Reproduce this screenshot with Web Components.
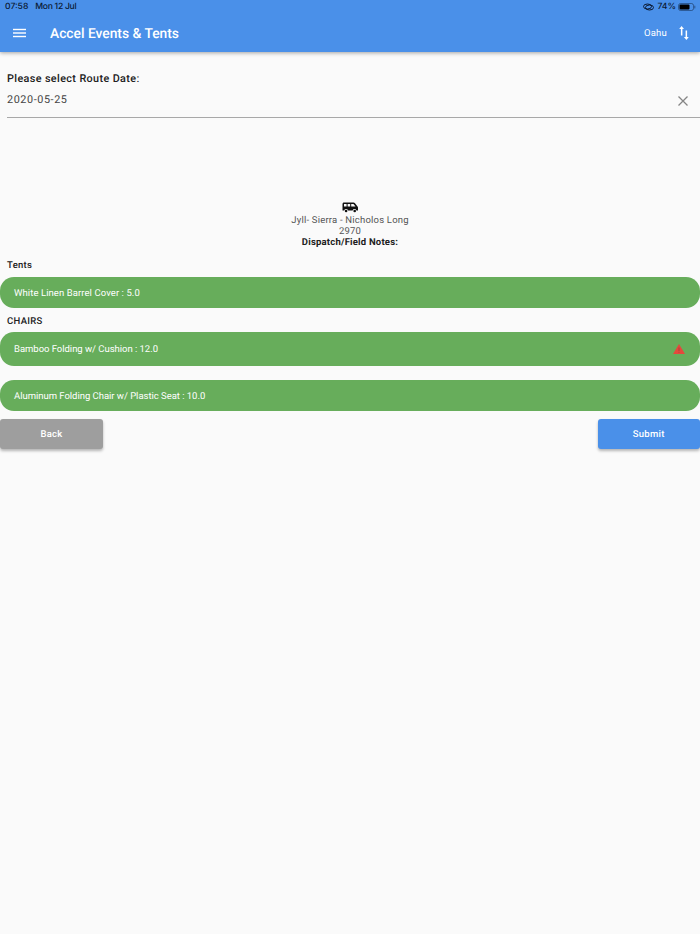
<!DOCTYPE html>
<html><head><meta charset="utf-8">
<style>
html,body{margin:0;padding:0;height:100%}
body{background:#fafafa;font-family:Roboto,sans-serif;color:#212121;height:934px;overflow:hidden;text-rendering:geometricPrecision}
</style></head><body>
<template id="t-bar"><style>
:host{display:block;height:52px;background:#4a90e9;box-shadow:0 1px 4px rgba(0,0,0,.35);position:relative;color:#fff}
.status{height:13px;display:flex;justify-content:space-between;align-items:center;padding:0 4px 0 5px;font:500 8.6px Inter,Roboto,sans-serif;color:#0b1a33}
.l{display:flex;gap:7px}.d{letter-spacing:-.3px}.r{display:flex;align-items:center;gap:2px}
.r svg:first-child{margin-right:1px}
.main{height:39px;display:flex;align-items:center;padding:0 11px 0 13px}
.title{font:500 13.8px Roboto,sans-serif;letter-spacing:0;margin-left:24px;flex:1;position:relative;top:1px}
.loc{font:400 9.5px Roboto,sans-serif;letter-spacing:.2px;margin-right:12px;position:relative;top:1px}
svg{display:block}
</style>
<div class="status"><div class="l"><span>07:58</span><span class="d">Mon 12 Jul</span></div>
<div class="r"><svg width="11" height="8" viewBox="0 0 11 8" fill="none" stroke="#0b1a33" stroke-width="1"><ellipse cx="4.5" cy="3.5" rx="4" ry="2.5"/><ellipse cx="6.5" cy="4.5" rx="4" ry="2.5"/></svg><span>74%</span>
<svg width="18" height="8" viewBox="0 0 18 8"><rect x=".5" y=".5" width="15" height="7" rx="2" fill="none" stroke="#0b1a33" stroke-opacity=".45"/><rect x="1.5" y="1.5" width="10" height="5" rx="1" fill="#000"/><rect x="16.3" y="2.5" width="1" height="3" rx=".5" fill="#0b1a33" fill-opacity=".5"/></svg></div></div>
<div class="main"><svg width="13" height="10" viewBox="0 0 13 10" fill="#fff"><rect width="13" height="1.4" y=".8"/><rect width="13" height="1.4" y="4.3"/><rect width="13" height="1.4" y="7.8"/></svg>
<span class="title"><slot></slot></span><span class="loc"><slot name="loc"></slot></span>
<svg width="10" height="14" viewBox="0 0 10 14" fill="#fff"><path d="M2.6 0 5 3H3.4v6.5H1.9V3H.2zM6.6 4.500h1.500V11H9.800L7.400 14 4.900 11h1.700z"/></svg></div>
</template>

<template id="t-date"><style>
:host{display:block;padding:20px 0 0 7px}
.lab{font:500 10.8px Roboto,sans-serif;letter-spacing:.38px;color:#212121;line-height:13px}
.row{height:32px;border-bottom:1px solid #a8a8a8;display:flex;justify-content:space-between;align-items:flex-start;padding:0 12px 0 0}
.v{font:400 10.800px Roboto,sans-serif;letter-spacing:.6px;color:#444;line-height:13px;padding-top:8px}
svg{margin-top:11px;display:block}
</style><div class="lab"><slot name="label"></slot></div>
<div class="row"><span class="v"><slot name="value"></slot></span>
<svg width="10" height="10" viewBox="0 0 10 10" stroke="#858585" stroke-width="1.300"><path d="M.5.5l9 9M9.500.5l-9 9"/></svg></div>
</template>

<template id="t-info"><style>
:host{display:block;text-align:center;padding-top:84px;font:400 9.500px/11px Roboto,sans-serif;letter-spacing:.2px;color:#555}
svg{display:block;margin:0 auto 2px}
</style><svg width="16" height="11" viewBox="0 0 16 11"><path fill="#111" d="M2 .5h9.500c.6 0 1.100.2 1.500.7l2.500 3.300c.3.400.5.800.5 1.300V8.500h-1.600a2 2 0 0 0-3.800 0H6a2 2 0 0 0-3.800 0H.5V2C.5 1.100 1.100.5 2 .5z"/><path fill="#fafafa" d="M2 2h2.600v2.600H2zM5.600 2h2.600v2.600H5.600zM9.200 2h2.300l2 2.600H9.200z"/><circle cx="4.100" cy="9" r="1.300" fill="#111"/><circle cx="12.700" cy="9" r="1.300" fill="#111"/></svg>
<slot></slot></template>

<template id="t-head"><style>
:host{display:block;padding-left:7px;font:500 9.500px/11px Roboto,sans-serif;letter-spacing:.3px;color:#212121}
</style><slot></slot></template>

<template id="t-item"><style>
:host{display:flex;align-items:center;justify-content:space-between;background:#67ad5b;color:#fff;border-radius:14px;padding:2px 15px 0 14px;box-sizing:border-box;font:400 9.500px Roboto,sans-serif;letter-spacing:var(--ls,-.03px);height:var(--h,31px)}
::slotted(svg){display:block;margin-top:-1px}
</style><span><slot></slot></span><slot name="icon"></slot></template>

<template id="t-btn"><style>
:host{display:flex;align-items:center;justify-content:center;height:30px;width:var(--w,103px);border-radius:3px;color:#fff;background:var(--bg,#9e9e9e);font:500 9.500px Roboto,sans-serif;letter-spacing:.3px;box-shadow:0 2px 3px rgba(0,0,0,.28)}
</style><slot></slot></template>

<template id="t-actions"><style>
:host{display:flex;justify-content:space-between;margin-top:8.500px}
</style><slot></slot></template>

<app-bar>Accel Events &amp; Tents<span slot="loc">Oahu</span></app-bar>
<date-field><span slot="label">Please select Route Date:</span><span slot="value">2020-05-25</span></date-field>
<route-info>Jyll- Sierra - Nicholos Long<br>2970<br><b style="font-weight:700;color:#212121">Dispatch/Field Notes:</b></route-info>
<section-head style="margin-top:12px">Tents</section-head>
<line-item style="margin-top:5.500px;--ls:.08px">White Linen Barrel Cover : 5.0</line-item>
<section-head style="margin-top:8px">CHAIRS</section-head>
<line-item style="margin-top:5px;--h:34px">Bamboo Folding w/ Cushion : 12.0<svg slot="icon" width="12" height="10" viewBox="0 0 12 10"><path fill="#e5483c" d="M6 0 12 10H0z"/><path fill="#a9423a" d="M5.500 3.500h1v3.500h-1zM5.500 7.700h1v1h-1z"/></svg></line-item>
<line-item style="margin-top:14px">Aluminum Folding Chair w/ Plastic Seat : 10.0</line-item>
<action-row><app-btn>Back</app-btn><app-btn style="--bg:#4a90e9;--w:102.500px">Submit</app-btn></action-row>
<script>
const reg=(n,t)=>customElements.define(n,class extends HTMLElement{constructor(){super();this.attachShadow({mode:'open'}).appendChild(document.getElementById(t).content.cloneNode(true));}});
reg('app-bar','t-bar');reg('date-field','t-date');reg('route-info','t-info');reg('section-head','t-head');reg('line-item','t-item');reg('app-btn','t-btn');reg('action-row','t-actions');
</script>
</body></html>
